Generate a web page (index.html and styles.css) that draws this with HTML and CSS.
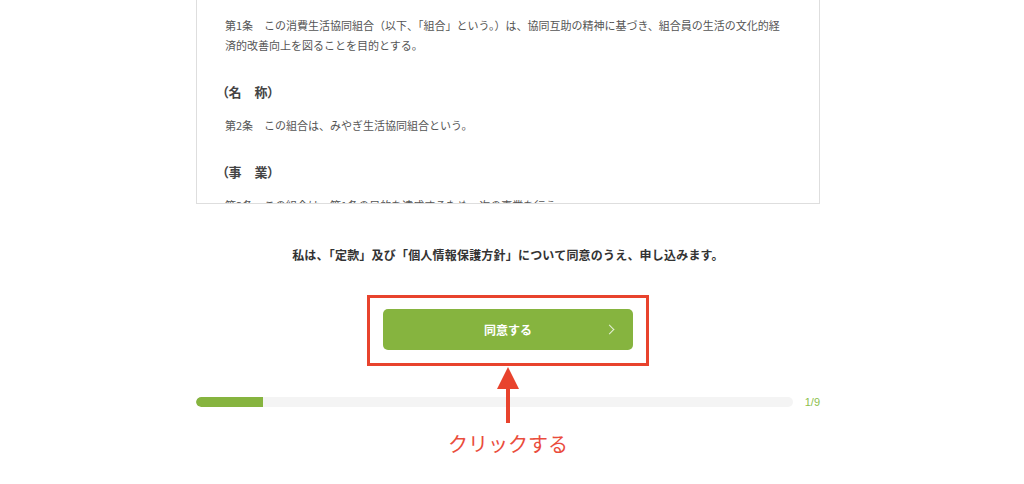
FILE: index.html
```html
<!DOCTYPE html>
<html lang="ja">
<head>
  <meta charset="UTF-8">
  <meta name="viewport" content="width=device-width, initial-scale=1.0">
  <title>同意確認</title>
  <link rel="stylesheet" href="styles.css">
</head>
<body>
  <div class="container">
    <!-- 定款スクロール枠 -->
    <div class="terms">
      <p>第1条　この消費生活協同組合（以下、「組合」という。）は、協同互助の精神に基づき、組合員の生活の文化的経済的改善向上を図ることを目的とする。</p>
      <h3>（名　称）</h3>
      <p>第2条　この組合は、みやぎ生活協同組合という。</p>
      <h3>（事　業）</h3>
      <p>第3条　この組合は、第1条の目的を達成するため、次の事業を行う。</p>
    </div>

    <p class="consent">私は、「定款」及び「個人情報保護方針」について同意のうえ、申し込みます。</p>

    <div class="action">
      <div class="highlight">
        <button class="agree-btn">同意する<span class="chevron"></span></button>
      </div>
      <svg class="arrow" width="24" height="56" viewBox="0 0 24 56">
        <polygon points="12,0 23,22 1,22" fill="#e8432d"/>
        <rect x="10" y="20" width="4" height="36" fill="#e8432d"/>
      </svg>
    </div>

    <div class="progress">
      <div class="bar"><div class="fill" style="width: 67px"></div></div>
      <span class="step">1/9</span>
    </div>

    <p class="note">クリックする</p>
  </div>
</body>
</html>
```

FILE: styles.css
```css
/* CSS */
body {
  margin: 0;
  background: #fff;
  font-family: "Noto Sans CJK JP", "Noto Sans", sans-serif;
  color: #333;
}

.container {
  width: 624px;
  margin-left: 196px;
}

.terms {
  height: 204px;
  box-sizing: border-box;
  border: 1px solid #dedede;
  border-top: none;
  overflow: hidden;
  padding: 15px 38px 0 28px;
  color: #555;
}

.terms p {
  margin: 0;
  font-size: 11px;
  line-height: 20px;
}

.terms h3 {
  margin: 27px 0 13px -3px;
  font-size: 13px;
  line-height: 20px;
  font-weight: bold;
  color: #444;
  font-feature-settings: "palt";
}

.terms h3 + p {
  margin-bottom: 25px;
}

.consent {
  margin: 39px 0 0;
  text-align: center;
  font-size: 12px;
  line-height: 24px;
  letter-spacing: 0.2px;
  font-weight: bold;
  color: #333;
}

.action {
  position: relative;
  display: flex;
  justify-content: center;
  margin-top: 28px;
}

.highlight {
  border: 3px solid #e8432d;
  padding: 11px 13px 13px;
}

.agree-btn {
  position: relative;
  display: block;
  width: 250px;
  height: 41px;
  border: none;
  border-radius: 5px;
  background: #86b43f;
  color: #fff;
  font-family: inherit;
  font-size: 12px;
  font-weight: bold;
  cursor: pointer;
}

.chevron {
  position: absolute;
  right: 20px;
  top: 50%;
  width: 6px;
  height: 6px;
  margin-top: -4px;
  border-top: 1px solid #e6f0d8;
  border-right: 1px solid #e6f0d8;
  transform: rotate(45deg);
}

.arrow {
  position: absolute;
  top: 100%;
  left: 50%;
  margin-left: -12px;
  margin-top: 1px;
}

.progress {
  display: flex;
  align-items: center;
  gap: 12px;
  margin-top: 30px;
}

.bar {
  flex: 1;
  height: 10px;
  border-radius: 5px;
  background: #f4f4f4;
  overflow: hidden;
}

.fill {
  height: 100%;
  background: #86b43f;
  border-radius: 5px 0 0 5px;
}

.step {
  font-size: 11px;
  color: #8cbf4d;
  font-family: "Liberation Sans", sans-serif;
}

.note {
  margin: 22px 0 0;
  text-align: center;
  font-size: 20px;
  line-height: 28px;
  color: #ea4c3c;
}
```
